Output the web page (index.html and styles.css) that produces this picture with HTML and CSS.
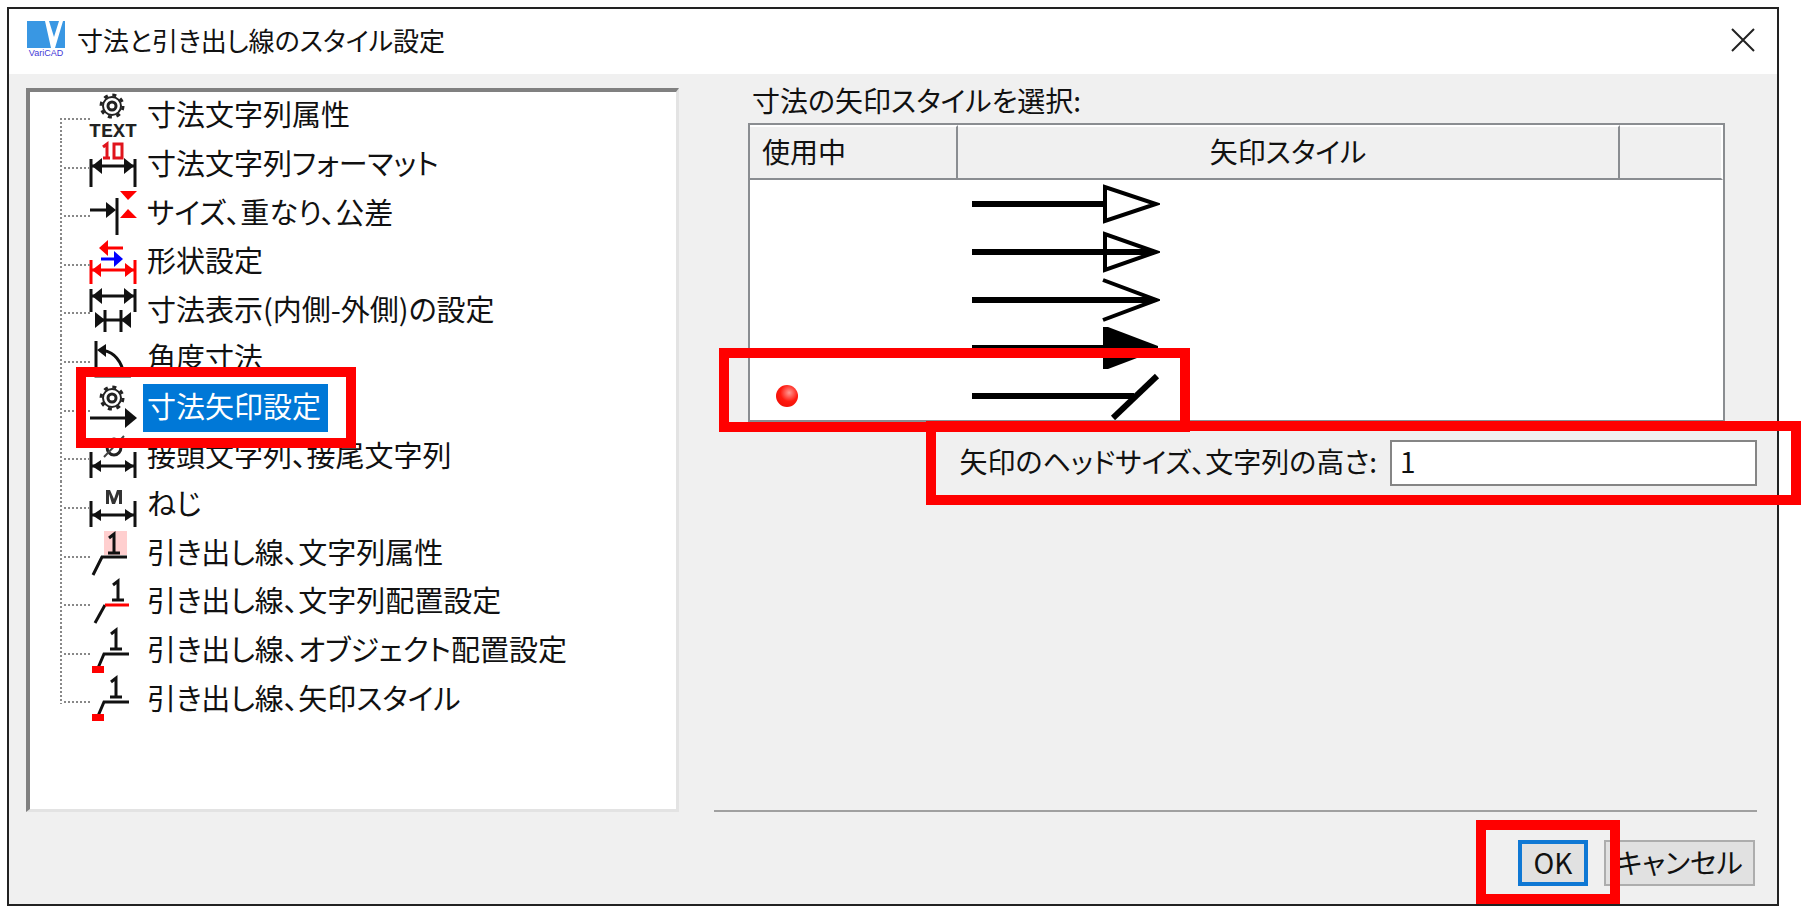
FILE: index.html
```
<!DOCTYPE html>
<html lang="ja">
<head>
  <meta charset="UTF-8">
  <meta name="viewport" content="width=device-width, initial-scale=1.0">
  <title>寸法と引き出し線のスタイル設定</title>
  <link rel="stylesheet" href="styles.css">
</head>
<body>

<!-- Shared icon parts -->
<svg class="defs" width="0" height="0" aria-hidden="true">
  <defs>
    <g id="gear" fill="none" stroke="#222">
      <circle cx="24" cy="11" r="9" stroke-width="2"/>
      <circle cx="24" cy="11" r="11" stroke-width="3" stroke-dasharray="4 4.64"/>
      <circle cx="24" cy="11" r="4" stroke-width="3"/>
    </g>
    <g id="dim">
      <path d="M3 -14V12M47 -14V12M4 0H46" fill="none" stroke="currentColor" stroke-width="3"/>
      <path d="M4 0L13 -6V6ZM46 0L37 -6V6Z" fill="currentColor"/>
    </g>
    <g id="one">
      <path d="M21 4L26 0V19M20 19H32" fill="none" stroke="#111" stroke-width="3"/>
    </g>
  </defs>
</svg>

<div class="dialog">
  <header class="titlebar">
    <svg class="logo" viewBox="0 0 38 37" aria-hidden="true">
      <rect width="38" height="27" fill="#3997e3"/>
      <path d="M18 0H22L27 16L32 0H36L28 27H24Z" fill="#fff"/>
      <text x="19" y="35" class="logo-text">VariCAD</text>
    </svg>
    <h1>寸法と引き出し線のスタイル設定</h1>
    <button class="close" type="button" aria-label="閉じる">
      <svg viewBox="0 0 24 24"><path d="M1 1L23 23M23 1L1 23" fill="none" stroke="#222" stroke-width="2"/></svg>
    </button>
  </header>

  <main class="content">
    <!-- Settings tree -->
    <ul class="tree">
      <li>
        <button type="button">
          <svg viewBox="0 -3 50 48"><use href="#gear"/><text x="25" y="42" class="t-text">TEXT</text></svg>
          <span class="label">寸法文字列属性</span>
        </button>
      </li>
      <li>
        <button type="button">
          <svg viewBox="0 -3 50 48">
            <path d="M3 15V43M47 15V43M4 22H46" fill="none" stroke="#111" stroke-width="3"/>
            <path d="M4 22L14 14V30ZM46 22L36 14V30Z" fill="#111"/>
            <path d="M15 3L19 0V14M15 14H22M26 0H34V14H26Z" fill="none" stroke="#e0141c" stroke-width="3"/>
          </svg>
          <span class="label">寸法文字列フォーマット</span>
        </button>
      </li>
      <li>
        <button type="button">
          <svg viewBox="0 -3 50 48">
            <path d="M2 18H20M29 6V43" fill="none" stroke="#111" stroke-width="3"/>
            <path d="M28 18L18 10V26Z" fill="#111"/>
            <path d="M32 -1H49L40 8ZM32 26H49L40 17Z" fill="#f00"/>
          </svg>
          <span class="label">サイズ、重なり、公差</span>
        </button>
      </li>
      <li>
        <button type="button">
          <svg viewBox="0 -3 50 48">
            <path d="M18 7H35" stroke="#f00" stroke-width="3"/><path d="M11 7L20 -1V15Z" fill="#f00"/>
            <path d="M13 18H28" stroke="#00f" stroke-width="3"/><path d="M35 18L26 10V26Z" fill="#00f"/>
            <path d="M3 19V43M47 19V43M4 29H46" fill="none" stroke="#f00" stroke-width="3"/>
            <path d="M4 29L13 22V36ZM46 29L37 22V36Z" fill="#f00"/>
          </svg>
          <span class="label">形状設定</span>
        </button>
      </li>
      <li>
        <button type="button">
          <svg viewBox="0 -3 50 48">
            <path d="M3 0V23M47 0V23M4 7H46M17 21V43M33 21V43M8 31H43" fill="none" stroke="#111" stroke-width="3"/>
            <path d="M4 7L14 -1V15ZM46 7L36 -1V15ZM17 31L7 23V39ZM33 31L43 23V39Z" fill="#111"/>
          </svg>
          <span class="label">寸法表示(内側-外側)の設定</span>
        </button>
      </li>
      <li>
        <button type="button">
          <svg viewBox="0 -3 50 48">
            <path d="M8 3V38H43M12 12Q29 13 35 32" fill="none" stroke="#111" stroke-width="3"/>
            <path d="M9 12L18 6V19Z" fill="#111"/>
          </svg>
          <span class="label">角度寸法</span>
        </button>
      </li>
      <li class="selected">
        <button type="button" aria-current="true">
          <svg viewBox="0 -3 50 48">
            <use href="#gear"/>
            <path d="M2 31H40" stroke="#111" stroke-width="3"/><path d="M49 31L37 21V41Z" fill="#111"/>
          </svg>
          <span class="label">寸法矢印設定<span class="callout callout-item"></span></span>
        </button>
      </li>
      <li>
        <button type="button">
          <svg viewBox="0 -3 50 48">
            <use href="#dim" y="31"/>
            <ellipse cx="26" cy="12" rx="7" ry="8" fill="none" stroke="#222" stroke-width="3"/>
            <path d="M16 22L36 1" stroke="#444" stroke-width="2"/>
          </svg>
          <span class="label">接頭文字列、接尾文字列</span>
        </button>
      </li>
      <li>
        <button type="button">
          <svg viewBox="0 -3 50 48">
            <use href="#dim" y="31"/>
            <path d="M18 6H22L26 15L29 6H34V20H31V10L27 20H24L21 10V20H18Z" fill="#333"/>
          </svg>
          <span class="label">ねじ</span>
        </button>
      </li>
      <li>
        <button type="button">
          <svg viewBox="0 -3 50 48">
            <rect x="16" y="-2" width="23" height="24" fill="#ffcfcf"/>
            <use href="#one" y="1"/>
            <path d="M39 24H14L5 42" fill="none" stroke="#111" stroke-width="3"/>
          </svg>
          <span class="label">引き出し線、文字列属性</span>
        </button>
      </li>
      <li>
        <button type="button">
          <svg viewBox="0 -3 50 48">
            <use href="#one" x="4"/>
            <path d="M17 24L7 42" stroke="#111" stroke-width="3"/>
            <path d="M17 24H41" stroke="#f00" stroke-width="3"/>
          </svg>
          <span class="label">引き出し線、文字列配置設定</span>
        </button>
      </li>
      <li>
        <button type="button">
          <svg viewBox="0 -3 50 48">
            <use href="#one" x="2"/>
            <path d="M41 24H16L10 38" fill="none" stroke="#111" stroke-width="3"/>
            <rect x="4" y="36" width="12" height="7" fill="#f00"/>
          </svg>
          <span class="label">引き出し線、オブジェクト配置設定</span>
        </button>
      </li>
      <li>
        <button type="button">
          <svg viewBox="0 -3 50 48">
            <use href="#one" x="2"/>
            <path d="M41 24H16L10 38" fill="none" stroke="#111" stroke-width="3"/>
            <rect x="4" y="36" width="12" height="7" fill="#f00"/>
          </svg>
          <span class="label">引き出し線、矢印スタイル</span>
        </button>
      </li>
    </ul>

    <!-- Arrow settings -->
    <section class="pane">
      <h2 id="arrowTitle">寸法の矢印スタイルを選択:</h2>
      <div class="table-container">
        <table aria-labelledby="arrowTitle">
          <thead>
          <tr>
            <th class="col-used">使用中</th>
            <th class="col-style">矢印スタイル</th>
            <th></th>
          </tr>
          </thead>
          <tbody>
          <tr>
            <td></td>
            <td><svg viewBox="0 0 188 48"><path d="M0 24H132" stroke="#000" stroke-width="6"/><path d="M133 7V41L184 24Z" fill="none" stroke="#000" stroke-width="4"/></svg></td>
            <td></td>
          </tr>
          <tr>
            <td></td>
            <td><svg viewBox="0 0 188 48"><path d="M0 24H182" stroke="#000" stroke-width="6"/><path d="M133 6V42L184 24Z" fill="none" stroke="#000" stroke-width="4"/></svg></td>
            <td></td>
          </tr>
          <tr>
            <td></td>
            <td><svg viewBox="0 0 188 48"><path d="M0 24H182" stroke="#000" stroke-width="6"/><path d="M131 4L184 24L131 44" fill="none" stroke="#000" stroke-width="4"/></svg></td>
            <td></td>
          </tr>
          <tr>
            <td></td>
            <td><svg viewBox="0 0 188 48"><path d="M0 24H140" stroke="#000" stroke-width="6"/><path d="M131 3H136L186 22V26L136 45H131Z"/></svg></td>
            <td></td>
          </tr>
          <tr>
            <td><span class="ball" role="img" aria-label="使用中"></span></td>
            <td><svg viewBox="0 0 188 48"><path d="M0 24H162" stroke="#000" stroke-width="6"/><path d="M141 46L185 4" stroke="#000" stroke-width="6"/></svg></td>
            <td></td>
          </tr>
          </tbody>
        </table>
        <span class="callout callout-row"></span>
      </div>
      <div class="field">
        <label for="headSize">矢印のヘッドサイズ、文字列の高さ:</label>
        <input type="text" id="headSize" value="1">
        <span class="callout callout-field"></span>
      </div>
    </section>
  </main>

  <footer class="actions">
    <div class="ok-wrap">
      <button class="btn btn-ok" type="button">OK</button>
      <span class="callout callout-ok"></span>
    </div>
    <button class="btn btn-cancel" type="button">キャンセル</button>
  </footer>
</div>

</body>
</html>
```
FILE: styles.css
```
* {
    margin: 0;
    padding: 0;
    box-sizing: border-box;
}

body {
    font-family: "Noto Sans CJK JP", sans-serif;
    font-feature-settings: "palt";
    font-size: 28px;
    font-weight: 400;
    line-height: 28px;
    color: #111;
    background-color: #fff;
    padding: 7px 29px 9px 7px;
}

button, input {
    font: inherit;
    font-feature-settings: inherit;
    color: inherit;
}

.defs {
    position: absolute;
}

.dialog {
    display: flex;
    flex-direction: column;
    min-height: calc(100vh - 17px);
    border: 2px solid #222;
    background-color: #f0f0f0;
}

/* Title bar */
.titlebar {
    display: flex;
    align-items: center;
    height: 65px;
    padding: 0 20px 4px 18px;
    background-color: #fff;
}

.logo {
    width: 38px;
    height: 37px;
    margin-right: 12px;
}

.logo-text {
    font: 9px "Liberation Sans", sans-serif;
    fill: #4338d8;
    text-anchor: middle;
}

.titlebar h1 {
    flex: 1;
    font-size: 26px;
    font-weight: 400;
}

.close {
    width: 28px;
    height: 28px;
    border: none;
    background: none;
}

.close svg {
    display: block;
    width: 24px;
    height: 24px;
    margin: auto;
}

.content {
    flex: 1;
    display: grid;
    grid-template-columns: 653fr 1043fr;
    gap: 35px;
    padding: 14px 20px 0 17px;
}

/* Settings tree */
.tree {
    display: grid;
    grid-auto-rows: 1fr;
    list-style: none;
    font-size: 29px;
    padding-bottom: 85px;
    background-color: #fff;
    border: 4px solid #808080;
    border-right: 3px solid #e3e3e3;
    border-bottom: 3px solid #e3e3e3;
}

.tree li {
    position: relative;
    padding-left: 58px;
}

/* dotted connectors */
.tree li::before {
    content: "";
    position: absolute;
    left: 30px;
    top: 0;
    bottom: 0;
    width: 2px;
    background: repeating-linear-gradient(#888 0 2px, transparent 2px 4px);
}

.tree li:first-child::before {
    top: 26px;
}

.tree li:last-child::before {
    bottom: 20px;
}

.tree li::after {
    content: "";
    position: absolute;
    left: 34px;
    top: 26px;
    width: 28px;
    height: 2px;
    background: repeating-linear-gradient(90deg, #888 0 2px, transparent 2px 4px);
}

.tree button {
    display: flex;
    height: 100%;
    border: none;
    background: none;
    white-space: nowrap;
}

.tree svg {
    width: 50px;
    height: 48px;
    margin-right: 5px;
    overflow: visible;
    color: #111;
}

.t-text {
    font: bold 20px "Liberation Mono", monospace;
    fill: #222;
    text-anchor: middle;
}

.label {
    position: relative;
    display: flex;
    align-items: center;
    padding: 0 7px 6px 4px;
}

.selected .label {
    background-color: #0078d7;
    color: #fff;
}

/* Arrow settings */
.pane {
    border-bottom: 2px solid #a0a0a0;
}

.pane h2 {
    font-size: 28px;
    font-weight: 400;
    line-height: 24px;
    padding-left: 38px;
    margin-bottom: 11px;
}

.table-container {
    position: relative;
    margin: 0 32px 0 34px;
    border: 2px solid #8a8d91;
    background-color: #fff;
}

table {
    width: 100%;
    table-layout: fixed;
    border-collapse: separate;
    border-spacing: 0;
}

th {
    height: 55px;
    padding-bottom: 4px;
    font-weight: 400;
    background-color: #f0f0f0;
    border-top: 2px solid #fff;
    border-right: 2px solid #8a8d91;
    border-bottom: 2px solid #8a8d91;
}

th:last-child {
    border-right-color: #fff;
}

.col-used {
    width: 21.4%;
    padding-left: 12px;
    text-align: left;
}

.col-style {
    width: 68%;
}

td {
    height: 48px;
}

td svg {
    display: block;
    width: 188px;
    height: 48px;
    margin-left: 14px;
}

.ball {
    display: block;
    width: 22px;
    height: 22px;
    margin-left: 26px;
    border-radius: 50%;
    background: radial-gradient(circle at 60% 35%, #ff9a94, #ff1a10 45%, #e80800);
}

.field {
    position: relative;
    display: flex;
    justify-content: flex-end;
    align-items: center;
    gap: 13px;
    margin: 18px 0 0 243px;
}

.field label {
    padding-bottom: 4px;
    white-space: nowrap;
}

.field input {
    width: 367px;
    height: 46px;
    padding: 0 8px 4px;
    border: 2px solid #858585;
    background-color: #fff;
}

/* Footer buttons */
.actions {
    display: flex;
    justify-content: flex-end;
    gap: 16px;
    padding: 28px 22px 18px;
}

.ok-wrap {
    position: relative;
}

.btn {
    display: block;
    height: 46px;
    padding-bottom: 2px;
    border: 2px solid #adadad;
    background-color: #e1e1e1;
}

.btn-ok {
    width: 70px;
    border: 4px solid #0f78d4;
}

.btn-cancel {
    width: 151px;
}

/* Red highlight frames */
.callout {
    position: absolute;
    z-index: 2;
    border: 10px solid #f00;
    pointer-events: none;
}

.callout-item {
    inset: -17px -28px -16px -67px;
}

.callout-row {
    left: -31px;
    bottom: -12px;
    width: 471px;
    height: 84px;
}

.callout-field {
    inset: -19px -44px -19px -31px;
}

.callout-ok {
    inset: -20px -32px -18px -42px;
}
```
